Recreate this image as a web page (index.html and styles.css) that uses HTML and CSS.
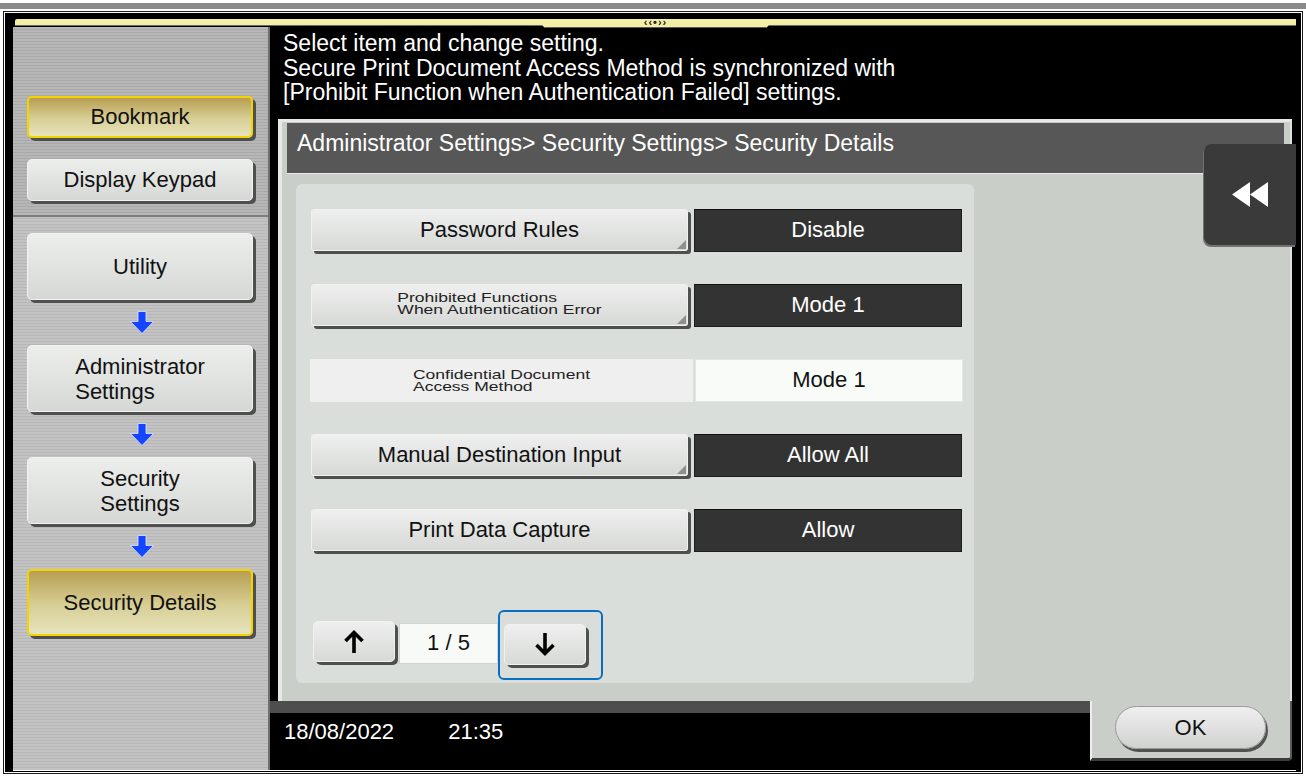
FILE: index.html
```html
<!DOCTYPE html>
<html lang="en">
<head>
    <meta charset="UTF-8">
    <meta name="viewport" content="width=device-width, initial-scale=1.0">
    <title>Security Details</title>
    <link rel="stylesheet" href="styles.css">
</head>
<body>
    <div class="device">
        <div class="frame">
            <div class="screen">
                <div class="top-strip">
                    <div class="grip">&lsaquo;&lsaquo;&bull;&rsaquo;&rsaquo;</div>
                </div>
                <div class="main">
                    <aside class="nav">
                        <div class="nav-top">
                            <button class="nav_btn gold small">Bookmark</button>
                            <button class="nav_btn small">Display Keypad</button>
                        </div>
                        <div class="nav-path">
                            <button class="nav_btn">Utility</button>
                            <div class="path-arrow">
                                <svg width="24" height="23" viewBox="0 0 24 23"><path d="M8 0.5h8v10h7.5L12 22.5 0.5 10.5H8z" fill="#1446ff" stroke="#dfe6ff" stroke-width="0.8"/></svg>
                            </div>
                            <button class="nav_btn"><span class="lines">Administrator<br>Settings</span></button>
                            <div class="path-arrow">
                                <svg width="24" height="23" viewBox="0 0 24 23"><path d="M8 0.5h8v10h7.5L12 22.5 0.5 10.5H8z" fill="#1446ff" stroke="#dfe6ff" stroke-width="0.8"/></svg>
                            </div>
                            <button class="nav_btn"><span class="lines">Security<br>Settings</span></button>
                            <div class="path-arrow">
                                <svg width="24" height="23" viewBox="0 0 24 23"><path d="M8 0.5h8v10h7.5L12 22.5 0.5 10.5H8z" fill="#1446ff" stroke="#dfe6ff" stroke-width="0.8"/></svg>
                            </div>
                            <button class="nav_btn gold">Security Details</button>
                        </div>
                    </aside>

                    <section class="work">
                        <p class="message">Select item and change setting.<br>Secure Print Document Access Method is synchronized with<br>[Prohibit Function when Authentication Failed] settings.</p>

                        <div class="panel">
                            <div class="crumb">Administrator Settings&gt; Security Settings&gt; Security Details</div>

                            <div class="setting-list">
                                <div class="setting-row">
                                    <button class="item_btn has-menu">Password Rules</button>
                                    <div class="value">Disable</div>
                                </div>
                                <div class="setting-row">
                                    <button class="item_btn has-menu"><span class="tiny">Prohibited Functions<br>When Authentication Error</span></button>
                                    <div class="value">Mode 1</div>
                                </div>
                                <div class="setting-row">
                                    <div class="item_off"><span class="tiny">Confidential Document<br>Access Method</span></div>
                                    <div class="value off">Mode 1</div>
                                </div>
                                <div class="setting-row">
                                    <button class="item_btn has-menu">Manual Destination Input</button>
                                    <div class="value">Allow All</div>
                                </div>
                                <div class="setting-row">
                                    <button class="item_btn">Print Data Capture</button>
                                    <div class="value">Allow</div>
                                </div>

                                <div class="pager">
                                    <button class="page_btn up">
                                        <svg width="22" height="25" viewBox="0 0 22 25"><path d="M11 3v21M2.5 12L11 3.5 19.5 12" fill="none" stroke="#000" stroke-width="3.6"/></svg>
                                    </button>
                                    <div class="page-count">1 / 5</div>
                                    <div class="focus-ring">
                                        <button class="page_btn">
                                            <svg width="22" height="25" viewBox="0 0 22 25"><path d="M11 1v21M2.5 13L11 21.5 19.5 13" fill="none" stroke="#000" stroke-width="3.6"/></svg>
                                        </button>
                                    </div>
                                </div>
                            </div>

                            <button class="back-tab">
                                <svg width="36" height="25" viewBox="0 0 36 25"><path d="M18 0L0 12.5 18 25zM36 0L18 12.5 36 25z" fill="#fff"/></svg>
                            </button>
                        </div>

                        <div class="footer">
                            <div class="status">
                                <span>18/08/2022</span>
                                <span class="time">21:35</span>
                            </div>
                            <div class="ok-tab">
                                <button class="ok_btn">OK</button>
                            </div>
                        </div>
                    </section>
                </div>
            </div>
        </div>
    </div>
</body>
</html>
```

FILE: styles.css
```css
body {
    margin: 0;
    background: #fff;
    font-family: "Liberation Sans", Arial, sans-serif;
}
button {
    font-family: inherit;
    cursor: pointer;
    padding: 0;
}

/* outer bezel */
.device {
    margin-top: 3px;
    border-top: 6px solid #8a8a8a;
    padding: 2px 3px 5px 3px;
}
.frame {
    border: 1px solid #1c1c1c;
    padding: 1px;
    background: #fff;
}
.screen {
    background: #000;
    height: 759px;
    box-sizing: border-box;
    padding: 6px 5px 2px 8px;
}

.top-strip {
    height: 6px;
    margin-bottom: 1px;
    margin-left: 2px;
    background: #f3efa6;
    border-bottom: 1px solid #6d6a55;
    border-radius: 2px 0 0 0;
    display: flex;
    justify-content: center;
}
.grip {
    position: relative;
    z-index: 1;
    width: 236px;
    height: 8px;
    background: #f3efa6;
    border-bottom: 1px solid #5b5a50;
    clip-path: polygon(0 0, 100% 0, 97% 100%, 3% 100%);
    font-size: 11px;
    font-weight: bold;
    line-height: 7px;
    text-align: center;
    letter-spacing: 1px;
    color: #222;
}

.main {
    display: flex;
    height: 743px;
    border-bottom: 1px solid #fff;
}

/* left navigation */
.nav {
    width: 255px;
    border-right: 2px solid #6f6f6f;
    background: repeating-linear-gradient(#c2c3c2 0 2px, #b6b7b6 2px 3px);
}
.nav-top {
    height: 190px;
    padding-top: 69px;
    box-sizing: border-box;
    border-bottom: 2px solid #7c7c7c;
    background: repeating-linear-gradient(#b6b6b6 0 2px, #a9a9a9 2px 3px);
}
.nav-path {
    padding-top: 16px;
}
.nav_btn {
    display: flex;
    align-items: center;
    justify-content: center;
    width: 226px;
    height: 67px;
    margin-left: 14px;
    border: 1px solid #f2f3f2;
    border-radius: 5px;
    background: linear-gradient(#eceeec, #d6d8d6);
    box-shadow: 3px 3px 0 #4f4f4f;
    font-size: 22px;
    color: #111;
}
.nav_btn.small {
    height: 42px;
    margin-bottom: 21px;
}
.nav_btn.gold {
    border: 2px solid #f2d400;
    background: linear-gradient(#b89e52, #d8cf96 55%, #e6e3bd);
}
.lines {
    text-align: left;
    line-height: 25px;
}
.path-arrow {
    display: flex;
    justify-content: center;
    width: 226px;
    margin: 11px 0 11px 16px;
    height: 23px;
}

/* right side */
.work {
    flex: 1;
    display: flex;
    flex-direction: column;
    background: #000;
}
.message {
    margin: 0;
    height: 92px;
    box-sizing: border-box;
    padding: 4px 0 0 13px;
    font-size: 23px;
    line-height: 24.5px;
    color: #fff;
}

.panel {
    position: relative;
    height: 582px;
    box-sizing: border-box;
    margin: 0 4px 0 8px;
    padding: 1px 6px 0 5px;
    background: #c9cec9;
    border-top: 3px solid #e6e9e6;
    border-left: 4px solid #e6e9e6;
    border-right: 2px solid #dfe3df;
}
.crumb {
    height: 50px;
    padding-left: 10px;
    background: #575757;
    border-bottom: 1px solid #e8e8e8;
    font-size: 23px;
    line-height: 41px;
    color: #fff;
}

.setting-list {
    width: 678px;
    height: 499px;
    box-sizing: border-box;
    margin: 10px 0 0 9px;
    padding: 25px 0 0 15px;
    background: #d9dedb;
    border-radius: 6px;
}
.setting-row {
    display: flex;
    height: 45px;
    margin-bottom: 30px;
}
.item_btn {
    position: relative;
    width: 377px;
    height: 42px;
    border: 1px solid #f0f1f0;
    border-radius: 3px;
    background: linear-gradient(#eeefee, #d7d9d7);
    box-shadow: 3px 3px 0 #4f4f4f;
    font-size: 22px;
    color: #111;
}
.has-menu::after {
    content: "";
    position: absolute;
    right: 1px;
    bottom: 1px;
    border-style: solid;
    border-width: 0 0 9px 9px;
    border-color: transparent transparent #8e8f8e transparent;
}
.tiny {
    display: inline-block;
    text-align: left;
    font-size: 17.5px;
    line-height: 17px;
    transform: scaleY(0.72);
    color: #222;
}
.item_off {
    display: flex;
    align-items: center;
    justify-content: center;
    width: 383px;
    height: 43px;
    margin-left: -1px;
    background: #efefef;
}
.value {
    width: 268px;
    height: 43px;
    box-sizing: border-box;
    margin-left: 6px;
    background: #333;
    border: 1px solid #1e1e1e;
    border-top-color: #111;
    font-size: 22px;
    line-height: 39px;
    text-align: center;
    color: #fff;
}
.value.off {
    margin-left: 2px;
    background: #f8fbf8;
    border-color: #e3e7e3;
    color: #111;
}

.pager {
    display: flex;
    align-items: flex-start;
    margin: 56px 0 0 2px;
}
.page_btn {
    display: flex;
    align-items: center;
    justify-content: center;
    width: 82px;
    height: 41px;
    border: 1px solid #f0f1f0;
    border-radius: 5px;
    background: linear-gradient(#eeefee, #d7d9d7);
    box-shadow: 3px 3px 0 #4f4f4f;
}
.page_btn.up {
    margin-top: 11px;
}
.page-count {
    width: 99px;
    height: 41px;
    box-sizing: border-box;
    margin: 13px 0 0 4px;
    background: #f8faf8;
    border: 1px solid #d2d6d2;
    font-size: 22px;
    line-height: 37px;
    text-align: center;
    color: #111;
}
.focus-ring {
    width: 105px;
    height: 70px;
    box-sizing: border-box;
    padding: 12px 0 0 4px;
    border: 2px solid #0a6fc4;
    border-radius: 6px;
}

.back-tab {
    position: absolute;
    top: 22px;
    right: -6px;
    width: 92px;
    height: 101px;
    border: 0;
    border-radius: 8px 0 0 8px;
    background: #3a3a3a;
    box-shadow: -1px 2px 0 #727272;
    display: flex;
    align-items: center;
    justify-content: center;
}

/* date bar and OK */
.footer {
    display: flex;
    height: 69px;
}
.status {
    flex: 1;
    border-top: 12px solid #4e4e4e;
    padding: 6px 0 0 14px;
    font-size: 22px;
    line-height: 26px;
    color: #fff;
}
.time {
    margin-left: 48px;
}
.ok-tab {
    width: 202px;
    height: 60px;
    box-sizing: border-box;
    margin-right: 4px;
    padding: 5px 0 0 23px;
    background: #c9cec9;
    border-left: 2px solid #eef0ee;
    border-right: 2px solid #5a5a5a;
    border-bottom: 3px solid #3c3c3c;
    border-radius: 0 0 4px 0;
}
.ok_btn {
    width: 151px;
    height: 43px;
    border: 1px solid #9a9a9a;
    border-radius: 22px;
    background: linear-gradient(#efefef, #d0d2d0);
    box-shadow: 2px 3px 0 #525252;
    font-size: 22px;
    color: #111;
}
```
